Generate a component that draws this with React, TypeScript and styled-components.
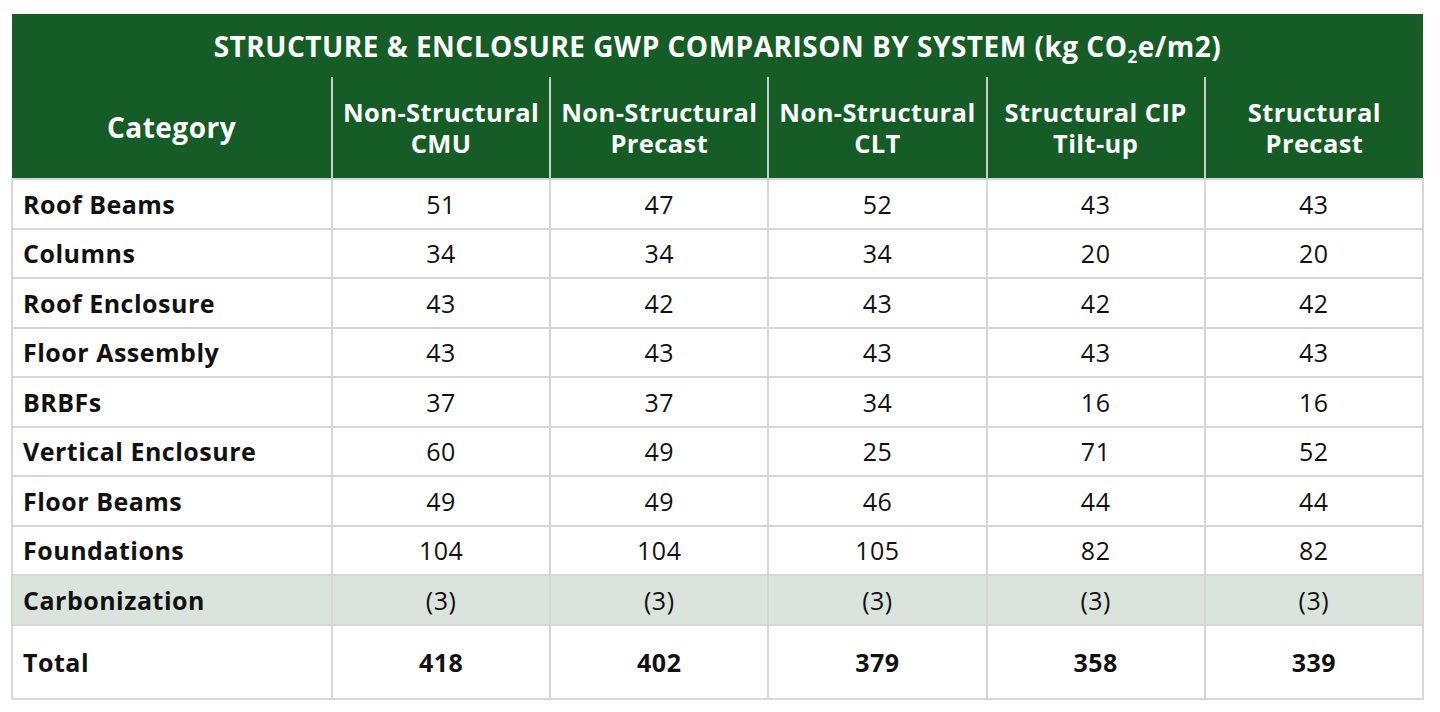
import React from "react";
import styled, { createGlobalStyle } from "styled-components";

const Global = createGlobalStyle`
  html, body { margin: 0; padding: 0; background: #ffffff; }
  body { font-family: "Open Sans", "Liberation Sans", sans-serif; }
`;

const Page = styled.div`
  padding: 14px 16px 0 11px;
`;

const Table = styled.table`
  width: 1413px;
  border-collapse: collapse;
  table-layout: fixed;
  font-family: "Open Sans", "Liberation Sans", sans-serif;
  color: #111;
`;

const TitleCell = styled.th`
  background: #165c26;
  color: #ffffff;
  height: 63px;
  padding: 0;
  font-size: 28px;
  font-weight: 700;
  text-align: center;
  vertical-align: middle;
  letter-spacing: 0.5px;
  sub { font-size: 17px; vertical-align: -6px; line-height: 0; }
`;

const HeadCell = styled.th<{ $first?: boolean }>`
  background: #165c26;
  color: #ffffff;
  height: 101px;
  padding: 0 2px;
  font-size: ${(p) => (p.$first ? "28px" : "25.5px")};
  letter-spacing: ${(p) => (p.$first ? "0.5px" : "0.4px")};
  line-height: 31px;
  font-weight: 700;
  text-align: center;
  vertical-align: middle;
  border-left: ${(p) => (p.$first ? "none" : "2px solid #c3d2c5")};
`;

const Row = styled.tr<{ $shade?: boolean }>`
  background: ${(p) => (p.$shade ? "#dbe4dc" : "#ffffff")};
`;

const Cell = styled.td<{ $label?: boolean; $total?: boolean }>`
  height: ${(p) => (p.$total ? "72px" : "47.5px")};
  padding: ${(p) => (p.$label ? "0 0 0 10px" : "0")};
  border: 2px solid #d6d6d6;
  font-size: 25px;
  letter-spacing: 0.5px;
  line-height: 30px;
  font-weight: ${(p) => (p.$label || p.$total ? 700 : 400)};
  text-align: ${(p) => (p.$label ? "left" : "center")};
  vertical-align: middle;
  white-space: nowrap;
`;

const columns = [
  ["Non-Structural", "CMU"],
  ["Non-Structural", "Precast"],
  ["Non-Structural", "CLT"],
  ["Structural CIP", "Tilt-up"],
  ["Structural", "Precast"],
];

const rows: { label: string; values: string[]; shade?: boolean }[] = [
  { label: "Roof Beams", values: ["51", "47", "52", "43", "43"] },
  { label: "Columns", values: ["34", "34", "34", "20", "20"] },
  { label: "Roof Enclosure", values: ["43", "42", "43", "42", "42"] },
  { label: "Floor Assembly", values: ["43", "43", "43", "43", "43"] },
  { label: "BRBFs", values: ["37", "37", "34", "16", "16"] },
  { label: "Vertical Enclosure", values: ["60", "49", "25", "71", "52"] },
  { label: "Floor Beams", values: ["49", "49", "46", "44", "44"] },
  { label: "Foundations", values: ["104", "104", "105", "82", "82"] },
  { label: "Carbonization", values: ["(3)", "(3)", "(3)", "(3)", "(3)"], shade: true },
];

const totals = ["418", "402", "379", "358", "339"];

export default function App() {
  return (
    <Page>
      <Global />
      <Table>
        <colgroup>
          <col style={{ width: 320 }} />
          <col />
          <col />
          <col />
          <col />
          <col />
        </colgroup>
        <thead>
          <tr>
            <TitleCell colSpan={6}>
              STRUCTURE &amp; ENCLOSURE GWP COMPARISON BY SYSTEM (kg CO<sub>2</sub>e/m2)
            </TitleCell>
          </tr>
          <tr>
            <HeadCell $first>Category</HeadCell>
            {columns.map((c) => (
              <HeadCell key={c.join()}>
                {c[0]}
                <br />
                {c[1]}
              </HeadCell>
            ))}
          </tr>
        </thead>
        <tbody>
          {rows.map((r) => (
            <Row key={r.label} $shade={r.shade}>
              <Cell $label>{r.label}</Cell>
              {r.values.map((v, i) => (
                <Cell key={i}>{v}</Cell>
              ))}
            </Row>
          ))}
          <Row>
            <Cell $label $total>
              Total
            </Cell>
            {totals.map((v, i) => (
              <Cell key={i} $total>
                {v}
              </Cell>
            ))}
          </Row>
        </tbody>
      </Table>
    </Page>
  );
}
